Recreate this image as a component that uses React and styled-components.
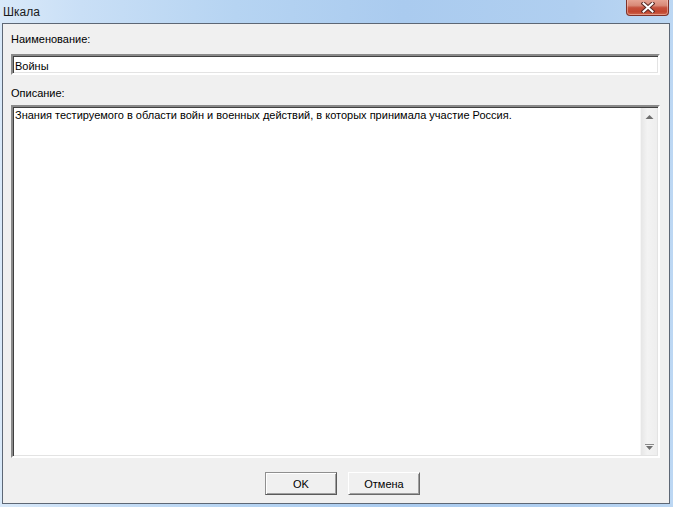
import React from "react";
import styled, { createGlobalStyle } from "styled-components";

const Global = createGlobalStyle`
  html, body { margin: 0; padding: 0; background: #bcd6f1; }
  body { font-family: "Liberation Sans", Arial, sans-serif; }
  #root { width: 673px; height: 507px; }
`;

const Window = styled.div`
  width: 673px;
  height: 507px;
  box-sizing: border-box;
  display: flex;
  flex-direction: column;
  padding: 0 3px 3px 2px;
  background: linear-gradient(90deg, #d9e9f9 0%, #c9dff6 12%, #b6d4f2 35%, #aacbef 60%, #b0cff0 85%, #bcd7f3 100%);
`;

const TitleBar = styled.div`
  height: 23px;
  flex: none;
  display: flex;
  align-items: flex-start;
  justify-content: space-between;
`;

const Title = styled.div`
  font-family: "Liberation Sans", Arial, sans-serif;
  font-size: 12px;
  color: #1a1a1a;
  padding: 5px 0 0 1px;
  line-height: 14px;
`;

const CloseButton = styled.div`
  width: 43px;
  height: 17px;
  margin: -1px 1px 0 0;
  box-sizing: border-box;
  border: 1px solid #7e3229;
  border-top: none;
  border-radius: 0 0 4px 4px;
  background: linear-gradient(180deg, #e8a898 0%, #d98a78 40%, #c5503c 55%, #c2462f 80%, #d06a50 100%);
  box-shadow: inset 0 0 0 1px rgba(255, 220, 210, 0.45);
  display: flex;
  align-items: center;
  justify-content: center;
`;

const Client = styled.div`
  flex: 1;
  display: flex;
  flex-direction: column;
  background: #f0f0f0;
  border: 1px solid #5d6775;
  padding: 8px 9px 8px 8px;
  min-height: 0;
`;

const Label = styled.div`
  font-size: 11px;
  line-height: 14px;
  height: 14px;
  color: #000;
  margin-bottom: ${(p) => p.$gap}px;
  margin-top: ${(p) => p.$top || 0}px;
`;

const Sunken = styled.div`
  box-sizing: border-box;
  border-style: solid;
  border-width: 2px;
  border-color: #8a8a8a #ffffff #ffffff #8a8a8a;
  box-shadow: inset 1px 1px 0 #404040, inset -1px -1px 0 #e3e3e3;
  background: #fff;
`;

const InputBox = styled(Sunken)`
  height: 21px;
  display: flex;
`;

const Field = styled.input`
  flex: 1;
  border: none;
  outline: none;
  background: transparent;
  font-family: "Liberation Sans", Arial, sans-serif;
  font-size: 11px;
  color: #000;
  padding: 0 0 0 1px;
  margin: 1px 0 0 1px;
  height: 17px;
`;

const MemoBox = styled(Sunken)`
  flex: 1;
  display: flex;
  min-height: 0;
`;

const Memo = styled.textarea`
  flex: 1;
  border: none;
  outline: none;
  resize: none;
  overflow: hidden;
  background: transparent;
  font-family: "Liberation Sans", Arial, sans-serif;
  font-size: 11px;
  line-height: 13px;
  color: #000;
  padding: 1px 2px 0 1px;
  margin: 1px 0 0 1px;
`;

const ScrollTrack = styled.div`
  width: 16px;
  margin: 1px 1px 1px 0;
  flex: none;
  background: linear-gradient(90deg, #e6e6e6 0%, #f3f3f3 40%, #eeeeee 100%);
  border-left: 1px solid #f6f6f6;
  display: flex;
  flex-direction: column;
  justify-content: space-between;
  align-items: center;
`;

const ArrowCell = styled.div`
  height: 17px;
  width: 100%;
  display: flex;
  align-items: center;
  justify-content: center;
`;

const ButtonRow = styled.div`
  margin-top: 14px;
  display: flex;
  justify-content: center;
  gap: 11px;
  padding-left: 14px;
`;

const Button = styled.button`
  width: 72px;
  height: 23px;
  box-sizing: border-box;
  font-family: "Liberation Sans", Arial, sans-serif;
  font-size: 11px;
  color: #000;
  background: #f0f0f0;
  border-style: solid;
  border-width: 1px;
  border-color: ${(p) => (p.$default ? "#8f8f8f #5a5a5a #5a5a5a #8f8f8f" : "#ffffff #6a6a6a #6a6a6a #ffffff")};
  box-shadow: ${(p) =>
    p.$default
      ? "inset 1px 1px 0 #ffffff, inset -1px -1px 0 #a0a0a0"
      : "inset 1px 1px 0 #f0f0f0, inset -1px -1px 0 #a0a0a0"};
  padding: 0;
`;

function CloseX() {
  return (
    <svg width="14" height="11" viewBox="0 0 14 11">
      <path d="M2.5 1.5 L11.5 9.5 M11.5 1.5 L2.5 9.5" stroke="#5a2a24" strokeWidth="4" strokeLinecap="square" />
      <path d="M2.5 1.5 L11.5 9.5 M11.5 1.5 L2.5 9.5" stroke="#ffffff" strokeWidth="2" strokeLinecap="square" />
    </svg>
  );
}

function Arrow({ down }) {
  return (
    <svg width="9" height="6" viewBox="0 0 9 6">
      {down ? (
        <>
          <rect x="0" y="0" width="9" height="1" fill="#8a8a8a" />
          <path d="M1 2 H8 L4.5 6 Z" fill="#6f6f6f" />
        </>
      ) : (
        <path d="M4.5 1 L8.5 5 H0.5 Z" fill="#6f6f6f" />
      )}
    </svg>
  );
}

export default function App() {
  return (
    <>
      <Global />
      <Window>
        <TitleBar>
          <Title>Шкала</Title>
          <CloseButton>
            <CloseX />
          </CloseButton>
        </TitleBar>
        <Client>
          <Label $gap={8}>Наименование:</Label>
          <InputBox>
            <Field defaultValue="Войны" />
          </InputBox>
          <Label $top={11} $gap={5}>Описание:</Label>
          <MemoBox>
            <Memo defaultValue="Знания тестируемого в области войн и военных действий, в которых принимала участие Россия." />
            <ScrollTrack>
              <ArrowCell>
                <Arrow />
              </ArrowCell>
              <ArrowCell>
                <Arrow down />
              </ArrowCell>
            </ScrollTrack>
          </MemoBox>
          <ButtonRow>
            <Button $default>OK</Button>
            <Button>Отмена</Button>
          </ButtonRow>
        </Client>
      </Window>
    </>
  );
}
